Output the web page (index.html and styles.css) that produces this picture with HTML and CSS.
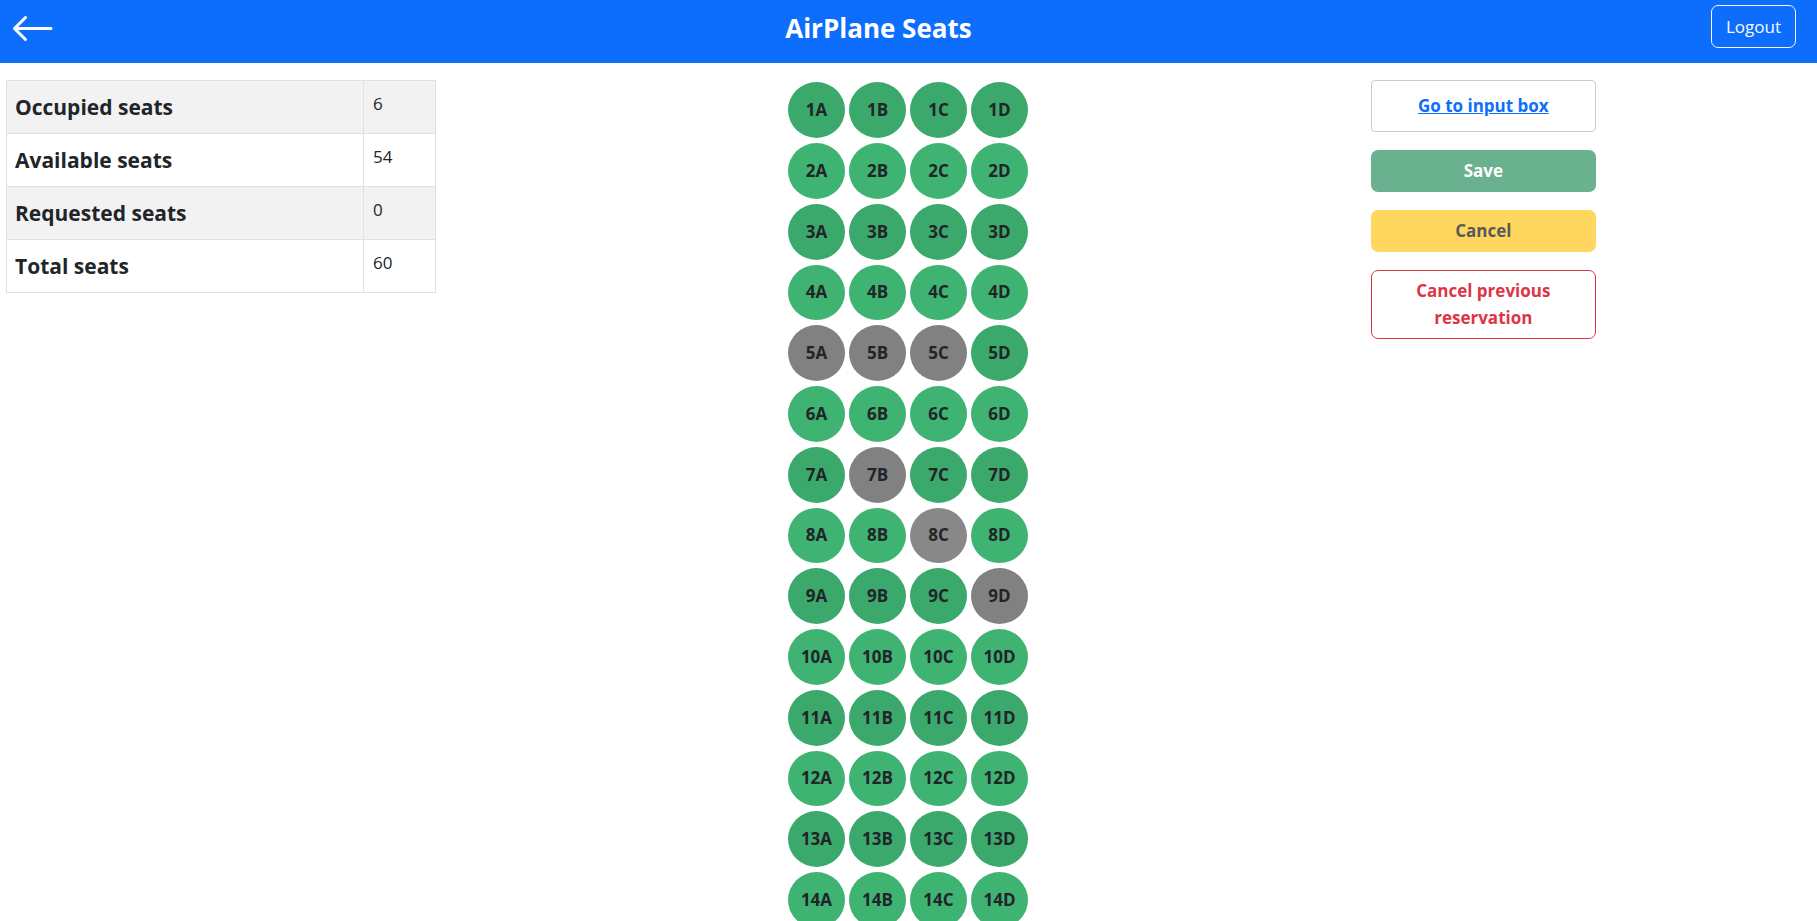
FILE: index.html
```html
<!DOCTYPE html>
<html lang="en">
<head>
<meta charset="utf-8">
<title>AirPlane Seats</title>
<link rel="stylesheet" href="styles.css">
</head>
<body>
<header class="topbar">
  <a class="back" href="#" aria-label="Back">
    <svg class="back-icon" viewBox="0 0 42 28" fill="none" stroke="#fff" stroke-width="3" stroke-linecap="round" stroke-linejoin="round" aria-hidden="true"><path d="M39 14.500H2.500M13.500 3.500L2.500 14.500L13.500 25.500"/></svg>
  </a>
  <h1 class="title">AirPlane Seats</h1>
  <button class="logout" type="button">Logout</button>
</header>
<main class="content">
  <section class="summary">
    <table class="stats">
      <tbody>
        <tr><th scope="row">Occupied seats</th><td>6</td></tr>
        <tr><th scope="row">Available seats</th><td>54</td></tr>
        <tr><th scope="row">Requested seats</th><td>0</td></tr>
        <tr><th scope="row">Total seats</th><td>60</td></tr>
      </tbody>
    </table>
  </section>
  <section class="seats" id="seats" aria-label="Seats"></section>
  <section class="actions">
    <div class="input-link"><a href="#">Go to input box</a></div>
    <button class="btn save" type="button" disabled>Save</button>
    <button class="btn cancel" type="button" disabled>Cancel</button>
    <button class="btn cancel-previous" type="button">Cancel previous reservation</button>
  </section>
</main>
<script src="seats.js"></script>
</body>
</html>
```
FILE: styles.css
```css
* { box-sizing: border-box; }

body {
  margin: 0;
  height: 100vh;
  display: flex;
  flex-direction: column;
  overflow: hidden;
  background: #fff;
  color: #212529;
  font: 17px/27px "Open Sans", "Noto Sans", sans-serif;
}

button { font: inherit; cursor: pointer; }

.topbar {
  flex: none;
  display: flex;
  justify-content: space-between;
  align-items: flex-start;
  min-height: 63px;
  padding: 5px 21px 0 12px;
  background: #0d6efd;
  color: #fff;
}

.back { padding-top: 9px; }
.back-icon { display: block; width: 42px; height: 28px; }

.title {
  margin: 0;
  padding: 6px 8px 0 0;
  font-size: 26px;
  line-height: 34px;
  font-weight: 700;
}

.logout {
  padding: 7px 14px;
  border: 1px solid #f8f9fa;
  border-radius: 7px;
  background: transparent;
  color: #f8f9fa;
}

.content {
  flex: 1;
  min-height: 0;
  display: grid;
  grid-template-columns: repeat(3, 1fr);
  align-items: start;
  padding: 17px 7px 0 6px;
  overflow: hidden;
}

.stats {
  width: 430px;
  border-collapse: collapse;
}

.stats th,
.stats td {
  padding: 9px;
  border: 1px solid #dee2e6;
  text-align: left;
  vertical-align: top;
}

.stats th {
  padding: 10px 8px 9px;
  font-size: 21px;
  line-height: 33px;
  font-weight: 700;
}

.stats td { width: 72px; }
.stats tr:nth-child(odd) { background: #f2f2f2; }

.seats {
  justify-self: center;
  display: flex;
  flex-direction: column;
  gap: 5px;
  padding-top: 2px;
}

.seat-row {
  display: grid;
  grid-template-columns: repeat(4, 57px);
  gap: 4px;
  height: 56px;
}

.seat-row:nth-child(4n) { height: 55px; }

.seat {
  padding: 0 0 2px;
  border: 0;
  border-radius: 50%;
  background: #3eb372;
  color: #212529;
  font-weight: 700;
}

.seat-row:nth-child(odd) .seat { background: #3ba96b; }
.seat-row .seat:disabled { background: #888; }
.seat-row:nth-child(odd) .seat:disabled { background: #818181; }

.actions {
  justify-self: center;
  display: flex;
  flex-direction: column;
  gap: 18px;
  width: 225px;
  margin-right: 52px;
  font-weight: 700;
}

.input-link {
  padding: 11px 12px 12px;
  border: 1px solid #ccc;
  border-radius: 4px;
  text-align: center;
}

.input-link a { color: #0d6efd; }

.btn {
  padding: 6px 13px 7px;
  border: 1px solid transparent;
  border-radius: 7px;
  font-weight: 700;
}

.save { background: #6ab190; color: #fff; }
.cancel { background: #ffd75e; color: #595959; }
.cancel-previous {
  border-color: #dc3545;
  background: transparent;
  color: #dc3545;
}
```
FILE: seats.js
```js
const occupied = new Set(["5A", "5B", "5C", "7B", "8C", "9D"]);
const seats = document.getElementById("seats");

for (let row = 1; row <= 14; row++) {
  const line = document.createElement("div");
  line.className = "seat-row";
  for (const letter of "ABCD") {
    const seat = document.createElement("button");
    seat.type = "button";
    seat.className = "seat";
    seat.textContent = row + letter;
    seat.disabled = occupied.has(seat.textContent);
    line.append(seat);
  }
  seats.append(line);
}
```
